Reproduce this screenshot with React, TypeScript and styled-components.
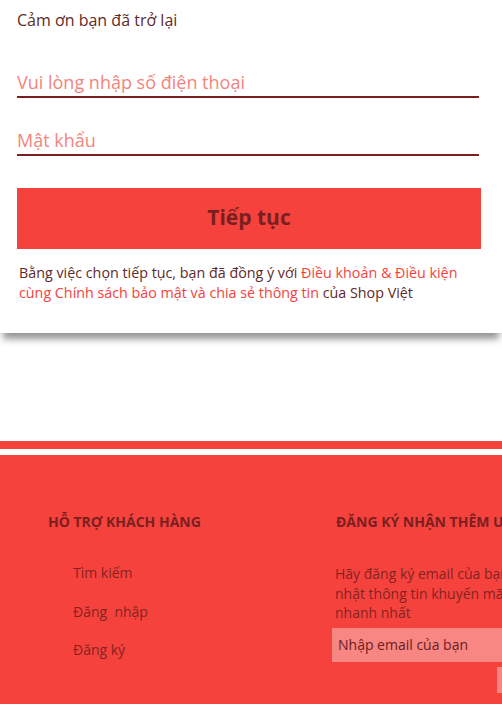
import React from "react";
import styled, { createGlobalStyle } from "styled-components";

const Global = createGlobalStyle`
  html, body { margin: 0; padding: 0; background: #fff; overflow: hidden; }
  body { font-family: "Open Sans", "Noto Sans", sans-serif; }
  * { box-sizing: border-box; }
`;

const RED = "#f6423d";
const DARK = "#7a1f1f";
const BROWN = "#5e2a2a";

const Page = styled.div`
  width: 502px;
  height: 704px;
  overflow: hidden;
  display: flex;
  flex-direction: column;
`;

const Card = styled.section`
  background: #fff;
  padding: 10px 21px 0 17px;
  height: 333px;
  box-shadow: 0 9px 7px -3px rgba(0, 0, 0, 0.42);
  position: relative;
  z-index: 1;
  display: flex;
  flex-direction: column;
`;

const Greeting = styled.div`
  font-size: 16px;
  line-height: 20px;
  color: ${BROWN};
`;

const Field = styled.input<{ $top: number }>`
  display: block;
  width: 462px;
  height: 36px;
  margin-top: ${(p) => p.$top}px;
  border: none;
  border-bottom: 2px solid ${DARK};
  outline: none;
  padding: 6px 0 0 0;
  font-family: inherit;
  font-size: 18px;
  color: ${BROWN};
  background: transparent;
  &::placeholder { color: #f5847e; }
`;

const Submit = styled.button`
  margin-top: 32px;
  width: 464px;
  height: 61px;
  border: none;
  padding: 0 0 3px 0;
  background: ${RED};
  color: ${DARK};
  font-family: inherit;
  font-weight: 700;
  font-size: 21px;
  cursor: pointer;
`;

const Terms = styled.p`
  margin: 14px 0 0 2px;
  font-size: 14.3px;
  line-height: 20px;
  color: ${BROWN};
  white-space: nowrap;
`;

const Link = styled.a`
  color: ${RED};
  text-decoration: none;
`;

const Spacer = styled.div`
  height: 108px;
  flex: none;
`;

const Stripe = styled.div`
  height: 8px;
  background: ${RED};
  flex: none;
`;

const Gap = styled.div`
  height: 6px;
  background: #fff;
  flex: none;
`;

const Footer = styled.footer`
  flex: 1;
  background: ${RED};
  display: grid;
  grid-template-columns: 288px 260px;
  padding: 57px 0 0 48px;
  color: ${DARK};
`;

const Column = styled.div`
  display: flex;
  flex-direction: column;
  white-space: nowrap;
`;

const Heading = styled.h3`
  margin: 0;
  font-size: 14px;
  line-height: 20px;
  font-weight: 700;
  color: ${DARK};
`;

const LinkList = styled.ul`
  list-style: none;
  margin: 31px 0 0 25px;
  padding: 0;
  display: flex;
  flex-direction: column;
  gap: 18.5px;
`;

const FooterLink = styled.li`
  font-size: 14px;
  line-height: 20px;
  color: #842222;
  white-space: pre;
`;

const Blurb = styled.p`
  margin: 32px 0 0 -1px;
  font-size: 14px;
  line-height: 19.5px;
  color: #842222;
`;

const EmailInput = styled.input`
  margin: 5px 0 0 -4px;
  width: 260px;
  height: 34px;
  border: none;
  outline: none;
  background: #f88682;
  padding: 0 6px;
  font-family: inherit;
  font-size: 14px;
  color: #6a2020;
  &::placeholder { color: #6a2020; }
`;

const SendButton = styled.button`
  margin: 5px 0 0 161px;
  width: 60px;
  height: 26px;
  border: none;
  background: #f88682;
`;

export default function App() {
  return (
    <Page>
      <Global />
      <Card>
        <Greeting>Cảm ơn bạn đã trở lại</Greeting>
        <Field $top={32} placeholder="Vui lòng nhập số điện thoại" />
        <Field $top={22} type="password" placeholder="Mật khẩu" />
        <Submit>Tiếp tục</Submit>
        <Terms>
          Bằng việc chọn tiếp tục, bạn đã đồng ý với <Link href="#">Điều khoản &amp; Điều kiện</Link>
          <br />
          <Link href="#">cùng Chính sách bảo mật và chia sẻ thông tin</Link> của Shop Việt
        </Terms>
      </Card>
      <Spacer />
      <Stripe />
      <Gap />
      <Footer>
        <Column>
          <Heading>HỖ TRỢ KHÁCH HÀNG</Heading>
          <LinkList>
            <FooterLink>Tìm kiếm</FooterLink>
            <FooterLink>Đăng  nhập</FooterLink>
            <FooterLink>Đăng ký</FooterLink>
          </LinkList>
        </Column>
        <Column>
          <Heading>ĐĂNG KÝ NHẬN THÊM ƯU ĐÃI</Heading>
          <Blurb>
            Hãy đăng ký email của bạn để cập
            <br />
            nhật thông tin khuyến mãi
            <br />
            nhanh nhất
          </Blurb>
          <EmailInput placeholder="Nhập email của bạn" />
          <SendButton aria-label="Gửi" />
        </Column>
      </Footer>
    </Page>
  );
}
